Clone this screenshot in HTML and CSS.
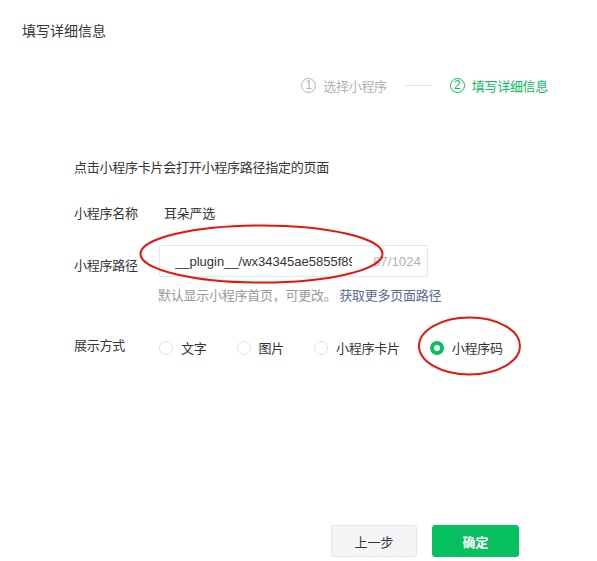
FILE: index.html
```html
<!DOCTYPE html>
<html lang="zh-CN">
<head>
<meta charset="utf-8">
<title>填写详细信息</title>
<link rel="stylesheet" href="styles.css">
</head>
<body>
<div class="page">
  <div class="title">填写详细信息</div>
  <div class="steps">
    <span class="step"><span class="num">1</span>选择小程序</span>
    <span class="step-line"></span>
    <span class="step active"><span class="num">2</span>填写详细信息</span>
  </div>
  <div class="form">
    <p class="desc">点击小程序卡片会打开小程序路径指定的页面</p>
    <div class="row row-name">
      <span class="label">小程序名称</span>
      <span class="value">耳朵严选</span>
    </div>
    <div class="row row-path">
      <span class="label label-path">小程序路径</span>
      <div class="field">
        <div class="input">
          <span class="input-text">__plugin__/wx34345ae5855f89dd/pages/index/index</span>
          <span class="counter">87/1024</span>
        </div>
        <p class="hint">默认显示小程序首页，可更改。 <a class="link">获取更多页面路径</a></p>
      </div>
    </div>
    <div class="row row-mode">
      <span class="label">展示方式</span>
      <div class="radios">
        <span class="radio"><span class="dot"></span>文字</span>
        <span class="radio"><span class="dot"></span>图片</span>
        <span class="radio"><span class="dot"></span>小程序卡片</span>
        <span class="radio checked"><span class="dot"></span>小程序码</span>
      </div>
    </div>
  </div>
  <div class="footer">
    <button class="btn btn-default">上一步</button>
    <button class="btn btn-primary">确定</button>
  </div>
  <svg class="marks" width="597" height="561" viewBox="0 0 597 561">
    <ellipse cx="261.5" cy="254" rx="121" ry="28.5" fill="none" stroke="#e8140f" stroke-width="2"/>
    <ellipse cx="469.5" cy="346" rx="50.5" ry="28.5" fill="none" stroke="#e8140f" stroke-width="2"/>
  </svg>
</div>
</body>
</html>
```
FILE: styles.css
```css
* { box-sizing: border-box; }
html, body { margin: 0; padding: 0; background: #fff; }
body {
  font-family: "Noto Sans CJK SC", "Noto Sans", sans-serif;
  color: #353535;
  font-size: 13px;
}
.page {
  position: relative;
  width: 597px;
  height: 561px;
  overflow: hidden;
}
.title {
  margin: 20px 0 0 22px;
  font-size: 14px;
  line-height: 20px;
  color: #353535;
}
.steps {
  display: flex;
  justify-content: flex-end;
  align-items: center;
  margin-top: 35px;
  padding-right: 49px;
  height: 20px;
  font-size: 13px;
  letter-spacing: -0.3px;
}
.step {
  display: inline-flex;
  align-items: center;
  color: #b2b2b2;
}
.step.active { color: #07c160; }
.num {
  display: inline-flex;
  align-items: center;
  justify-content: center;
  width: 15px;
  height: 15px;
  border: 1px solid currentColor;
  border-radius: 50%;
  font-family: "Liberation Sans", sans-serif;
  font-size: 12px;
  line-height: 1;
  margin-right: 7px;
  letter-spacing: 0;
}
.step-line {
  width: 27px;
  height: 1px;
  background: #e2e2e2;
  margin: 0 18px;
}
.form {
  margin-top: 62px;
  padding-left: 74px;
  letter-spacing: -0.25px;
}
.desc {
  margin: 0;
  line-height: 20px;
}
.row {
  display: flex;
  align-items: flex-start;
}
.label {
  width: 85px;
  flex: none;
  line-height: 20px;
  color: #353535;
}
.row-name { margin-top: 26px; }
.value { line-height: 20px; padding-left: 5px; }
.row-path { margin-top: 22px; }
.label-path { padding-top: 10px; }
.input {
  display: flex;
  align-items: center;
  width: 269px;
  height: 32px;
  border: 1px solid #e4e8eb;
  border-radius: 2px;
  padding: 0 6px 0 15px;
}
.input-text {
  flex: none;
  width: 177px;
  overflow: hidden;
  white-space: nowrap;
  font-family: "Liberation Sans", sans-serif;
  font-size: 13px;
  letter-spacing: 0;
  color: #353535;
}
.counter {
  margin-left: auto;
  font-family: "Liberation Sans", sans-serif;
  font-size: 13.3px;
  letter-spacing: 0;
  color: #b2b2b2;
}
.hint {
  margin: 8px 0 0 -1px;
  line-height: 20px;
  color: #9a9a9a;
}
.link { color: #576b95; text-decoration: none; }
.row-mode { margin-top: 30px; }
.radios {
  display: flex;
  align-items: center;
  gap: 30px;
  margin-top: 3px;
  height: 20px;
}
.radio {
  display: inline-flex;
  align-items: center;
  line-height: 20px;
}
.dot {
  width: 14px;
  height: 14px;
  border: 1px solid #e2e2e2;
  border-radius: 50%;
  margin-right: 8px;
  background: #fff;
}
.radio.checked .dot {
  border: 4.5px solid #07c160;
  background: #fff;
}
.footer {
  display: flex;
  justify-content: flex-end;
  gap: 15px;
  margin-top: 167px;
  padding-right: 78px;
}
.btn {
  width: 86px;
  height: 32px;
  border-radius: 3px;
  font-family: "Noto Sans CJK SC", sans-serif;
  font-size: 13px;
  cursor: pointer;
  padding: 0;
}
.btn-default {
  background: #f4f5f7;
  border: 1px solid #e2e5e8;
  color: #353535;
}
.btn-primary {
  width: 87px;
  background: #07c160;
  border: 1px solid #07c160;
  color: #fff;
  font-weight: bold;
}
.marks {
  position: absolute;
  left: 0;
  top: 0;
  pointer-events: none;
}
```
